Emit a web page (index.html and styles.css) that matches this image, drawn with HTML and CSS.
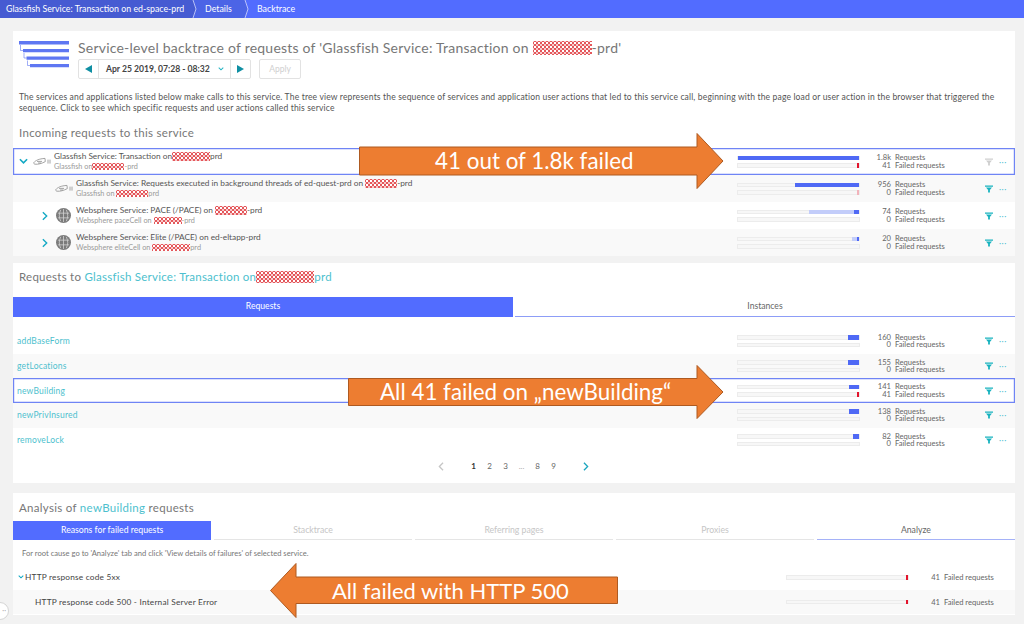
FILE: index.html
```html
<!DOCTYPE html>
<html lang="en">
<head>
<meta charset="utf-8">
<title>Service-level backtrace</title>
<link rel="stylesheet" href="styles.css">
</head>
<body>
<svg class="defs" width="0" height="0" aria-hidden="true">
  <symbol id="funnel" viewBox="0 0 8 8"><path d="M0 .6h8v1.2H0zM1 2.6h6L4.9 5v2.600H3.100V5z"/></symbol>
  <symbol id="fish" viewBox="0 0 18 9"><path d="M.8 5.600C2.600 3.400 6 1.800 12 1.400l.3 3.200C9 6.400 5 7.600 2 7.200 1 7 .6 6.400.8 5.600zM4 4.400h5M5 6h3M15 2.600v4M17 2.600v4" fill="none" stroke="#9a9a9a" stroke-width=".9"/></symbol>
  <symbol id="globe" viewBox="0 0 16 16"><circle cx="8" cy="8" r="8" fill="#7b7b7b"/><path d="M2 5.500h12M2 10.500h12M8 1v14M5 2c-2 4-2 8 0 12M11 2c2 4 2 8 0 12" fill="none" stroke="#d6d6d6" stroke-width=".8"/></symbol>
  <symbol id="down" viewBox="0 0 10 7"><path d="M1 1l4 4 4-4" fill="none" stroke="currentColor" stroke-width="1.800"/></symbol>
  <symbol id="right" viewBox="0 0 7 11"><path d="M1 1l4.500 4.500L1 10" fill="none" stroke="currentColor" stroke-width="1.600"/></symbol>
</svg>

<nav class="crumbs">
  <span class="crumb crumb-first">Glassfish Service: Transaction on ed-space-prd</span>
  <svg class="sep sep-one" viewBox="0 0 6 18" aria-hidden="true"><polygon class="sep-a" points="0,0 2,0 5,9 2,18 0,18"/><polyline class="sep-l" points="2,0 5,9 2,18"/></svg>
  <span class="crumb crumb-second">Details</span>
  <svg class="sep" viewBox="0 0 6 18" aria-hidden="true"><polygon class="sep-b" points="0,0 2,0 5,9 2,18 0,18"/><polyline class="sep-l" points="2,0 5,9 2,18"/></svg>
  <span class="crumb crumb-last">Backtrace</span>
</nav>

<main class="page">
  <section class="panel panel-one">
    <header class="head">
      <svg class="logo" viewBox="0 0 50 27" aria-hidden="true">
        <path fill="#5f77f2" d="M0 0h50v3.400H0zM4 8h46v3.200H4zM7.500 15.500H50v3.200H7.500zM11 23h39v3.200H11z"/>
        <path fill="none" stroke="#5f77f2" stroke-width=".6" d="M1.500 4v5.500H4M5 12v5h2.500M8.500 19.500v5H11"/>
      </svg>
      <div class="head-main">
        <h1 class="title">Service-level backtrace of requests of 'Glassfish Service: Transaction on <span class="redact w-title"></span>-prd'</h1>
        <div class="controls">
          <div class="picker">
            <span class="pick-btn"><i class="tri tri-left"></i></span>
            <span class="pick-date">Apr 25 2019, 07:28 - 08:32<svg class="pick-chev"><use href="#down"/></svg></span>
            <span class="pick-btn"><i class="tri tri-right"></i></span>
          </div>
          <span class="apply">Apply</span>
        </div>
      </div>
    </header>
    <p class="desc">The services and applications listed below make calls to this service. The tree view represents the sequence of services and application user actions that led to this service call, beginning with the page load or user action in the browser that triggered the sequence. Click to see which specific requests and user actions called this service</p>
    <h2 class="sub sub-in">Incoming requests to this service</h2>

    <div class="row row-tall selected">
      <div class="name">
        <svg class="chev-down"><use href="#down"/></svg>
        <svg class="ic-fish"><use href="#fish"/></svg>
        <div><div class="n1">Glassfish Service: Transaction on<span class="redact w-38"></span>prd</div><div class="n2">Glassfish on<span class="redact w-32"></span>-prd</div></div>
      </div>
      <div class="bars">
        <div class="track"><b class="fill" style="width:100%"></b></div>
        <div class="track"><b class="fill fail" style="width:2%"></b></div>
      </div>
      <div class="nums"><span>1.8k</span><span>41</span></div>
      <div class="labels"><span>Requests</span><span>Failed requests</span></div>
      <svg class="funnel off"><use href="#funnel"/></svg>
      <span class="dots">···</span>
    </div>

    <div class="row row-tall child zebra">
      <div class="name">
        <span class="chev-space"></span>
        <svg class="ic-fish"><use href="#fish"/></svg>
        <div><div class="n1">Glassfish Service: Requests executed in background threads of ed-quest-prd on <span class="redact w-32"></span>-prd</div><div class="n2">Glassfish on <span class="redact w-32"></span>prd</div></div>
      </div>
      <div class="bars">
        <div class="track"><b class="fill" style="width:53%"></b></div>
        <div class="track"><b class="fill fail-light" style="width:2%"></b></div>
      </div>
      <div class="nums"><span>956</span><span>0</span></div>
      <div class="labels"><span>Requests</span><span>Failed requests</span></div>
      <svg class="funnel"><use href="#funnel"/></svg>
      <span class="dots">···</span>
    </div>

    <div class="row row-tall child">
      <div class="name">
        <svg class="chev-right"><use href="#right"/></svg>
        <svg class="ic-globe"><use href="#globe"/></svg>
        <div><div class="n1">Websphere Service: PACE (/PACE) on <span class="redact w-32"></span>-prd</div><div class="n2">Websphere paceCell on <span class="redact w-28"></span>-prd</div></div>
      </div>
      <div class="bars">
        <div class="track"><b class="fill-light" style="width:37%"></b><b class="fill" style="width:4%"></b></div>
        <div class="track"></div>
      </div>
      <div class="nums"><span>74</span><span>0</span></div>
      <div class="labels"><span>Requests</span><span>Failed requests</span></div>
      <svg class="funnel"><use href="#funnel"/></svg>
      <span class="dots">···</span>
    </div>

    <div class="row row-tall child zebra">
      <div class="name">
        <svg class="chev-right"><use href="#right"/></svg>
        <svg class="ic-globe"><use href="#globe"/></svg>
        <div><div class="n1">Websphere Service: Elite (/PACE) on ed-eltapp-prd</div><div class="n2">Websphere eliteCell on <span class="redact w-38"></span>prd</div></div>
      </div>
      <div class="bars">
        <div class="track"><b class="fill-light" style="width:4%"></b><b class="fill" style="width:1.500%"></b></div>
        <div class="track"></div>
      </div>
      <div class="nums"><span>20</span><span>0</span></div>
      <div class="labels"><span>Requests</span><span>Failed requests</span></div>
      <svg class="funnel"><use href="#funnel"/></svg>
      <span class="dots">···</span>
    </div>
  </section>

  <section class="panel panel-two">
    <h2 class="sub sub-req">Requests to <span class="link">Glassfish Service: Transaction on<span class="redact w-58"></span>prd</span></h2>
    <div class="tabs-two">
      <div class="tab2 tab2-on">Requests</div>
      <div class="tab2">Instances</div>
    </div>
    <div class="list">
      <div class="row row-req">
        <div class="name"><span class="req">addBaseForm</span></div>
        <div class="bars"><div class="track"><b class="fill" style="width:9.500%"></b></div><div class="track"></div></div>
        <div class="nums"><span>160</span><span>0</span></div>
        <div class="labels"><span>Requests</span><span>Failed requests</span></div>
        <svg class="funnel"><use href="#funnel"/></svg><span class="dots">···</span>
      </div>
      <div class="row row-req zebra">
        <div class="name"><span class="req">getLocations</span></div>
        <div class="bars"><div class="track"><b class="fill" style="width:9%"></b></div><div class="track"></div></div>
        <div class="nums"><span>155</span><span>0</span></div>
        <div class="labels"><span>Requests</span><span>Failed requests</span></div>
        <svg class="funnel"><use href="#funnel"/></svg><span class="dots">···</span>
      </div>
      <div class="row row-req selected">
        <div class="name"><span class="req">newBuilding</span></div>
        <div class="bars"><div class="track"><b class="fill" style="width:8.500%"></b></div><div class="track"><b class="fill fail" style="width:2%"></b></div></div>
        <div class="nums"><span>141</span><span>41</span></div>
        <div class="labels"><span>Requests</span><span>Failed requests</span></div>
        <svg class="funnel"><use href="#funnel"/></svg><span class="dots">···</span>
      </div>
      <div class="row row-req zebra">
        <div class="name"><span class="req">newPrivInsured</span></div>
        <div class="bars"><div class="track"><b class="fill" style="width:8%"></b></div><div class="track"></div></div>
        <div class="nums"><span>138</span><span>0</span></div>
        <div class="labels"><span>Requests</span><span>Failed requests</span></div>
        <svg class="funnel"><use href="#funnel"/></svg><span class="dots">···</span>
      </div>
      <div class="row row-req">
        <div class="name"><span class="req">removeLock</span></div>
        <div class="bars"><div class="track"><b class="fill" style="width:5%"></b></div><div class="track"></div></div>
        <div class="nums"><span>82</span><span>0</span></div>
        <div class="labels"><span>Requests</span><span>Failed requests</span></div>
        <svg class="funnel"><use href="#funnel"/></svg><span class="dots">···</span>
      </div>
    </div>
    <div class="pager">
      <svg class="pg-prev"><use href="#right"/></svg>
      <span class="pg-on">1</span><span>2</span><span>3</span><span class="pg-gap">...</span><span>8</span><span>9</span>
      <svg class="pg-next"><use href="#right"/></svg>
    </div>
  </section>

  <section class="panel panel-three">
    <h2 class="sub sub-an">Analysis of <span class="link">newBuilding</span> requests</h2>
    <div class="tabs-five">
      <div class="tab5 tab5-on">Reasons for failed requests</div>
      <div class="tab5">Stacktrace</div>
      <div class="tab5">Referring pages</div>
      <div class="tab5">Proxies</div>
      <div class="tab5 tab5-act">Analyze</div>
    </div>
    <p class="note">For root cause go to 'Analyze' tab and click 'View details of failures' of selected service.</p>
    <div class="frow">
      <div class="fname"><svg class="chev-small"><use href="#down"/></svg>HTTP response code 5xx</div>
      <div class="bars"><div class="track"><b class="fill fail" style="width:2%"></b></div></div>
      <div class="fnum">41</div><div class="flabel">Failed requests</div>
    </div>
    <div class="frow zebra">
      <div class="fname fname-sub">HTTP response code 500 - Internal Server Error</div>
      <div class="bars"><div class="track"><b class="fill fail" style="width:2%"></b></div></div>
      <div class="fnum">41</div><div class="flabel">Failed requests</div>
    </div>
  </section>
</main>

<div class="help">··</div>

<div class="arrow arrow-one">
  <svg viewBox="0 0 365 56" aria-hidden="true"><polygon points="0.500,14 338,14 338,0.500 364,28 338,55.500 338,42 0.500,42"/></svg>
  <span class="arrow-text">41 out of 1.8k failed</span>
</div>
<div class="arrow arrow-two">
  <svg viewBox="0 0 376 54" aria-hidden="true"><polygon points="0.500,13.500 349,13.500 349,0.500 375,27 349,53.500 349,40.500 0.500,40.500"/></svg>
  <span class="arrow-text">All 41 failed on „newBuilding“</span>
</div>
<div class="arrow arrow-three">
  <svg viewBox="0 0 348 55" aria-hidden="true"><polygon points="347.500,14 26,14 26,0.500 0.500,27.500 26,54.500 26,40.500 347.500,40.500"/></svg>
  <span class="arrow-text arrow-text-small">All failed with HTTP 500</span>
</div>
</body>
</html>
```
FILE: styles.css
```css
* { box-sizing: border-box; }
html, body { margin: 0; height: 100%; }
body {
  position: relative;
  width: 1024px;
  height: 624px;
  overflow: hidden;
  background: #f2f2f2;
  font-family: "Lato", "Open Sans", sans-serif;
  color: #555;
}
.defs { position: absolute; }

/* breadcrumb */
.crumbs {
  display: flex;
  height: 18px;
  background: #526cff;
  color: #fff;
  font-size: 8.800px;
  line-height: 17px;
}
.crumb { white-space: nowrap; }
.crumb-first { width: 191px; padding-left: 6px; background: #465bd2; }
.crumb-second { width: 46px; padding-left: 8px; background: #4c64e6; }
.crumb-last { padding-left: 8px; }
.sep { width: 6px; height: 18px; flex: none; }
.sep-one { background: #4c64e6; }
.sep-a { fill: #465bd2; }
.sep-b { fill: #4c64e6; }
.sep-l { fill: none; stroke: #e6e9ff; stroke-width: .7; }

/* page */
.page {
  display: flex;
  flex-direction: column;
  padding: 13px 9px 0 13px;
}
.panel { background: #fff; }
.panel-one { height: 225px; }
.panel-two { height: 220px; margin-top: 7px; }
.panel-three { height: 122px; margin-top: 10px; }

.head { display: flex; padding: 10px 0 0 6px; }
.logo { width: 50px; height: 27px; flex: none; }
.head-main { margin-left: 9px; }
.title {
  margin: -2px 0 0;
  font-size: 14px;
  font-weight: 400;
  line-height: 18px;
  color: #777;
  letter-spacing: .22px;
  white-space: nowrap;
}
.controls { display: flex; margin-top: 2px; }
.picker {
  display: flex;
  width: 173px;
  height: 20px;
  border: 1px solid #e2e2e2;
  border-radius: 2px;
}
.pick-btn {
  display: flex;
  flex: none;
  width: 19px;
  align-items: center;
  justify-content: center;
}
.pick-date {
  flex: 1;
  display: flex;
  align-items: center;
  padding-left: 7px;
  border-left: 1px solid #e2e2e2;
  border-right: 1px solid #e2e2e2;
  font-size: 8.600px;
  font-weight: 700;
  color: #444;
  white-space: nowrap;
}
.pick-chev { width: 6px; height: 4px; margin-left: 8px; color: #2ab6c4; }
.tri { width: 0; height: 0; border-top: 4px solid transparent; border-bottom: 4px solid transparent; }
.tri-left { border-right: 7px solid #0f8fa3; }
.tri-right { border-left: 7px solid #0f8fa3; }
.apply {
  width: 42px;
  height: 20px;
  margin-left: 8px;
  border: 1px solid #e2e2e2;
  border-radius: 2px;
  font-size: 8.500px;
  line-height: 18px;
  text-align: center;
  color: #cfcfcf;
}
.desc {
  margin: 13px 6px 0;
  font-size: 8.550px;
  line-height: 10.500px;
  color: #555;
  letter-spacing: .15px;
}
.sub {
  margin: 0;
  font-weight: 400;
  color: #777;
  white-space: nowrap;
}
.sub-in { margin: 13px 0 8px 6px; font-size: 11.500px; line-height: 14px; letter-spacing: .3px; }
.sub-req { padding: 6px 0 0 6px; font-size: 11.500px; line-height: 15px; letter-spacing: .25px; }
.sub-an { padding: 7px 0 0 6px; font-size: 11.500px; line-height: 15px; letter-spacing: .3px; }
.link { color: #4dbfce; }

.redact {
  display: inline-block;
  height: 1em;
  vertical-align: -.15em;
  background-color: #fff;
  background-image:
    radial-gradient(circle at center, #fff 1px, #e4575b 1.200px, #e4575b 1.600px, #f6c9ca 2px);
  background-size: 4px 4px;
}
.w-28 { width: 28px; }
.w-32 { width: 32px; }
.w-38 { width: 38px; }
.w-58 { width: 58px; }
.w-title { width: 59px; }

/* rows */
.row {
  display: grid;
  grid-template-columns: 1fr 123px 31px 94px 12px 18px;
  align-items: center;
  position: relative;
}
.row-tall { height: 27px; }
.row-req { height: 24.700px; }
.zebra { background: #f9f9f9; }
.selected { box-shadow: inset 0 0 0 1.200px #6f84f5; }
.name { display: flex; align-items: center; padding-left: 6px; }
.child .name { padding-left: 28px; }
.chev-down { width: 9px; height: 7px; margin-right: 5px; color: #14a9c4; flex: none; }
.chev-space { width: 14px; flex: none; }
.chev-right { width: 6px; height: 10px; margin: 0 8px 0 1px; color: #14a9c4; flex: none; }
.ic-fish { width: 18px; height: 9px; margin-right: 3px; flex: none; }
.ic-globe { width: 15px; height: 15px; margin-right: 5px; flex: none; }
.n1 { font-size: 8.300px; line-height: 9.500px; color: #555; white-space: nowrap; }
.n2 { font-size: 7.300px; line-height: 9px; color: #9a9a9a; white-space: nowrap; }

.bars { display: flex; flex-direction: column; gap: 3px; }
.track {
  display: flex;
  justify-content: flex-end;
  height: 4.500px;
  background: #f7f7f7;
  border: 1px solid #ececec;
}
.fill, .fill-light { display: block; height: 4.500px; margin-top: -1px; flex: none; }
.fill { background: #4f69f5; }
.fill-light { background: #c3cdfa; }
.fail { background: #e3142c; }
.fail-light { background: #f2b3bb; }
.nums {
  display: flex;
  flex-direction: column;
  align-items: flex-end;
  font-size: 7.600px;
  line-height: 7.400px;
  color: #666;
}
.labels {
  display: flex;
  flex-direction: column;
  padding-left: 4px;
  font-size: 7.600px;
  line-height: 7.400px;
  color: #666;
  white-space: nowrap;
}
.funnel { width: 8px; height: 8px; fill: #19b3bf; }
.funnel.off { fill: #cfcfcf; }
.dots { padding-left: 2px; font-size: 8px; line-height: 8px; color: #49bcd0; font-weight: 400; letter-spacing: .5px; white-space: nowrap; }

/* requests tabs */
.tabs-two { display: flex; gap: 2px; margin-top: 13px; }
.tab2 {
  flex: 1;
  height: 20px;
  border-bottom: 1px solid #8d9df7;
  font-size: 8.600px;
  line-height: 19px;
  text-align: center;
  color: #666;
}
.tab2-on { background: #526cff; color: #fff; border-bottom: none; }
.list { margin-top: 12px; }
.req { font-size: 8.500px; color: #4dbfce; letter-spacing: .2px; }
.row-req .name { padding-left: 4px; }

.pager {
  display: flex;
  align-items: center;
  justify-content: center;
  height: 28px;
  padding-right: 2px;
  font-size: 8px;
  color: #666;
}
.pager span { width: 16px; text-align: center; }
.pager .pg-on { font-weight: 700; color: #333; }
.pager .pg-gap { color: #aaa; }
.pg-prev { width: 6px; height: 9px; margin-right: 22px; color: #c6c6c6; transform: scaleX(-1); }
.pg-next { width: 6px; height: 9px; margin-left: 21px; color: #1ba6bf; }

/* analysis */
.tabs-five { display: flex; gap: 2.700px; margin-top: 6px; }
.tab5 {
  flex: 1;
  height: 19px;
  border-bottom: 1px solid #e5e5e5;
  font-size: 8.700px;
  line-height: 18px;
  text-align: center;
  color: #c6c6c6;
}
.tab5-on { background: #526cff; color: #fff; border-bottom: none; }
.tab5-act { color: #666; border-bottom-color: #a5b2f8; }
.note { margin: 9px 0 7px 9px; font-size: 7.600px; line-height: 9px; color: #777; }
.frow {
  display: grid;
  grid-template-columns: 1fr 123px 33px 73px;
  align-items: center;
  height: 24.600px;
}
.fname {
  display: flex;
  align-items: center;
  padding-left: 5px;
  font-size: 8.300px;
  color: #444;
  letter-spacing: .2px;
  white-space: nowrap;
}
.fname-sub { padding-left: 22px; }
.chev-small { width: 6px; height: 4px; margin-right: 1px; color: #14a9c4; }
.fnum { padding-right: 2px; font-size: 7.600px; text-align: right; color: #666; }
.flabel { padding-left: 2px; font-size: 7.600px; color: #666; white-space: nowrap; }

.help {
  position: absolute;
  left: -9px;
  top: 602px;
  width: 18px;
  height: 18px;
  border: 1px solid #d5d5d5;
  border-radius: 50%;
  background: #fff;
  font-size: 7px;
  line-height: 15px;
  text-align: right;
  padding-right: 2px;
  color: #aaa;
}

/* callouts */
.arrow { position: absolute; display: flex; align-items: center; }
.arrow svg { position: absolute; inset: 0; width: 100%; height: 100%; }
.arrow polygon { fill: #ed7d31; stroke: #ae5a21; stroke-width: 1; }
.arrow-text {
  position: relative;
  font-family: "Lato", "Open Sans", sans-serif;
  color: #fff;
  font-size: 22.400px;
  line-height: 24px;
  white-space: nowrap;
}
.arrow-text-small { font-size: 22px; }
.arrow-one { left: 359px; top: 133px; width: 365px; height: 56px; padding-left: 76px; }
.arrow-two { left: 348px; top: 365px; width: 376px; height: 54px; padding-left: 32px; }
.arrow-three { left: 270px; top: 563px; width: 348px; height: 55px; padding-left: 62px; }
```
